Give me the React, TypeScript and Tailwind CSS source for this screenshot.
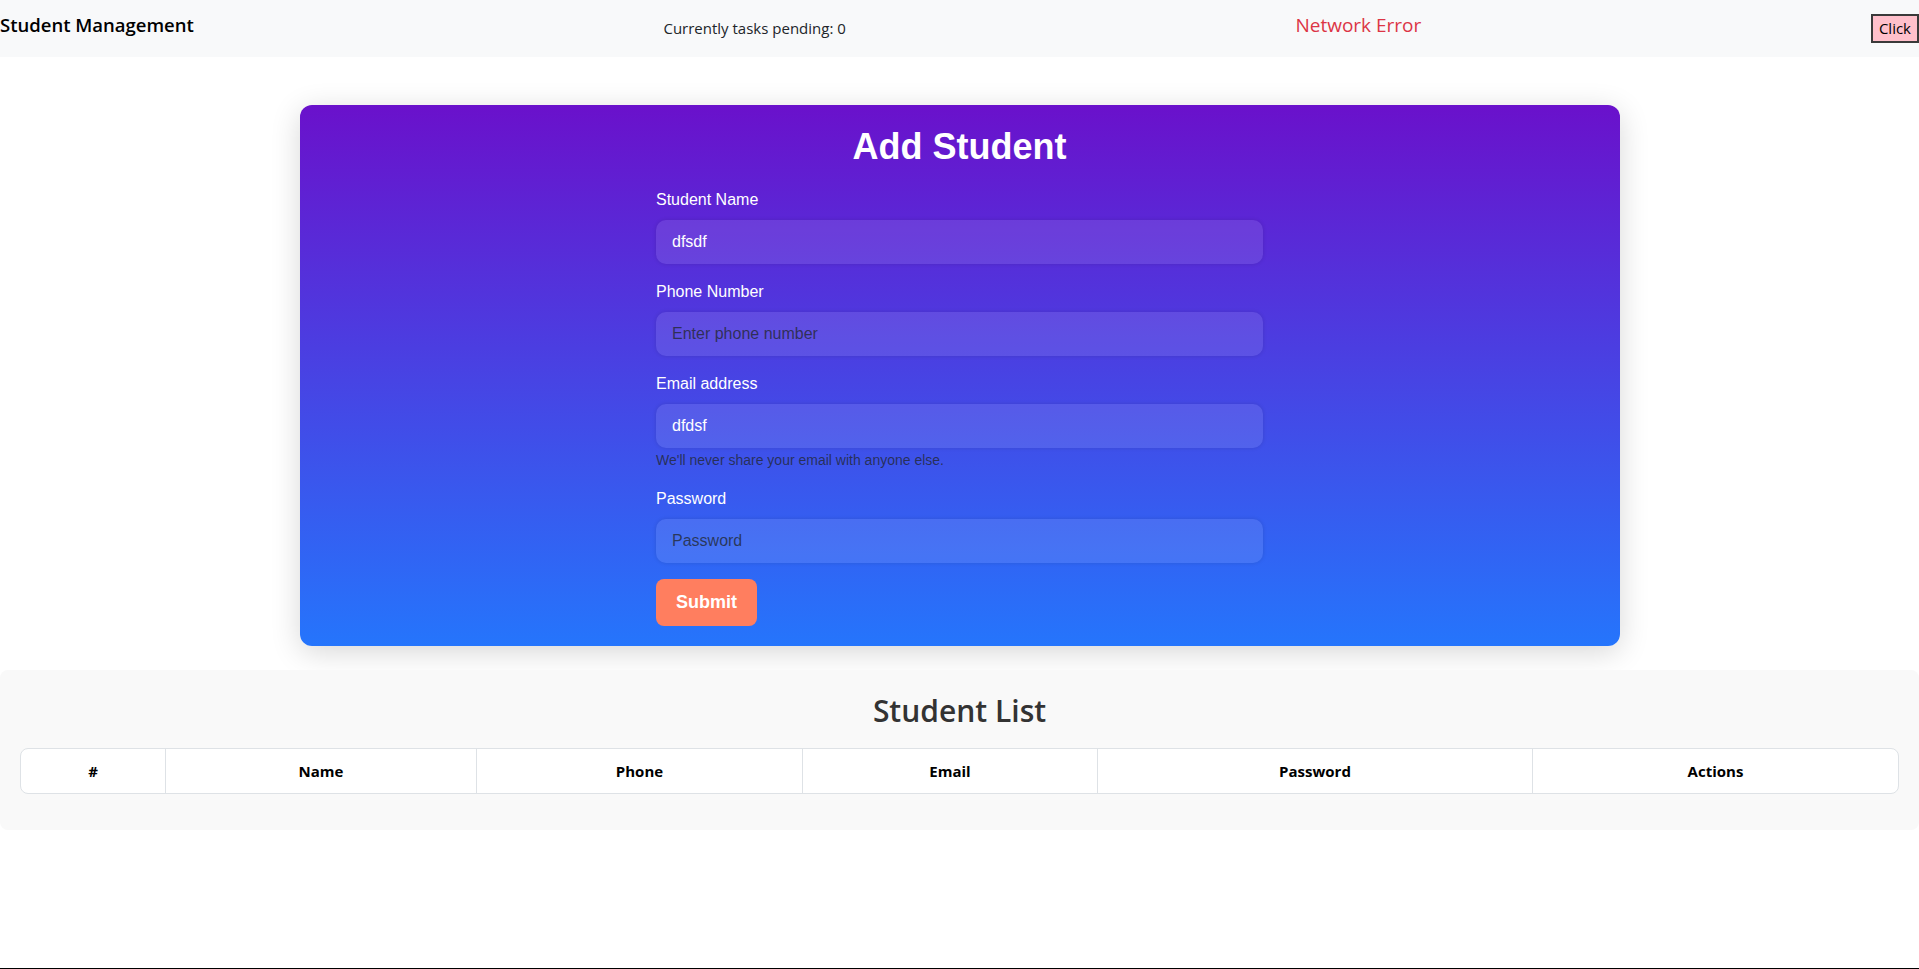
import React from "react";

const columns: { label: string; w: string }[] = [
  { label: "#", w: "144px" },
  { label: "Name", w: "311px" },
  { label: "Phone", w: "326px" },
  { label: "Email", w: "295px" },
  { label: "Password", w: "435px" },
  { label: "Actions", w: "1fr" },
];

function Field({
  label,
  value,
  placeholder,
  type = "text",
  help,
}: {
  label: string;
  value?: string;
  placeholder?: string;
  type?: string;
  help?: string;
}) {
  return (
    <div className="mb-4">
      <label className="block text-[16px] leading-6 text-white mb-2">{label}</label>
      <input
        type={type}
        defaultValue={value}
        placeholder={placeholder}
        className="block w-full h-[44px] rounded-[10px] bg-white/10 px-4 text-[16px] text-white outline-none shadow-[0_0_4px_rgba(0,0,0,0.12)] placeholder:text-[rgba(33,37,41,0.75)] font-['Liberation_Sans',Arial,sans-serif]"
      />
      {help && (
        <div className="mt-[2px] text-[14px] leading-[21px] text-[rgba(33,37,41,0.75)]">{help}</div>
      )}
    </div>
  );
}

export default function App() {
  return (
    <div className="min-h-[969px] flex flex-col bg-white font-['Open_Sans','Noto_Sans',sans-serif]">
      {/* Navbar */}
      <nav className="h-[57px] bg-[#f8f9fa] flex items-center justify-between">
        <div className="text-[18.5px] font-semibold text-black leading-[28px] -mt-[8px]">
          Student Management
        </div>
        <div className="text-[15px] text-[#212529] leading-[22px] -mt-[2px] ml-[20px]">
          Currently tasks pending: 0
        </div>
        <div className="text-[19px] text-[#dc3545] leading-[28px] -mt-[8px]">
          Network Error
        </div>
        <button className="h-[29px] px-[6px] -mt-[1px] border-2 border-[#3a3a3a] bg-[#ffc0cb] text-[15px] leading-[21px] text-black">
          Click
        </button>
      </nav>

      {/* Add Student card */}
      <div className="mx-auto mt-[48px] w-[1320px] rounded-xl bg-[linear-gradient(to_bottom,#6a11cb,#2575fc)] px-5 pt-5 pb-5 shadow-[0_6px_30px_rgba(0,0,0,0.16)] font-['Liberation_Sans',Arial,sans-serif]">
        <h2 className="text-center text-[36px] font-bold leading-[1.2] text-white mb-[20px]">
          Add Student
        </h2>
        <form className="mx-auto w-[607px]" onSubmit={(e) => e.preventDefault()}>
          <Field label="Student Name" value="dfsdf" />
          <Field label="Phone Number" placeholder="Enter phone number" />
          <Field
            label="Email address"
            value="dfdsf"
            type="email"
            help="We'll never share your email with anyone else."
          />
          <Field label="Password" placeholder="Password" type="password" />
          <button
            type="submit"
            className="h-[47px] px-5 rounded-lg bg-[#ff7e5f] text-white font-bold text-[18px]"
          >
            Submit
          </button>
        </form>
      </div>

      {/* Student list */}
      <section className="mt-6 w-full rounded-lg bg-[#f9f9f9] px-5 pt-[22px] pb-5">
        <h2 className="text-center text-[30px] font-semibold leading-[38px] text-[#333] mb-[18px]">
          Student List
        </h2>
        <div className="mb-4 rounded-lg border border-[#dee2e6] bg-white grid grid-cols-[144px_311px_326px_295px_435px_1fr] overflow-hidden">
          {columns.map((c, i) => (
            <div
              key={c.label}
              className={
                "py-[10px] text-center text-[15px] font-bold leading-[24px] text-black" +
                (i > 0 ? " border-l border-[#dee2e6]" : "")
              }
            >
              {c.label}
            </div>
          ))}
        </div>
      </section>

      <div className="flex-1" />
      <div className="h-px bg-black" />
    </div>
  );
}
